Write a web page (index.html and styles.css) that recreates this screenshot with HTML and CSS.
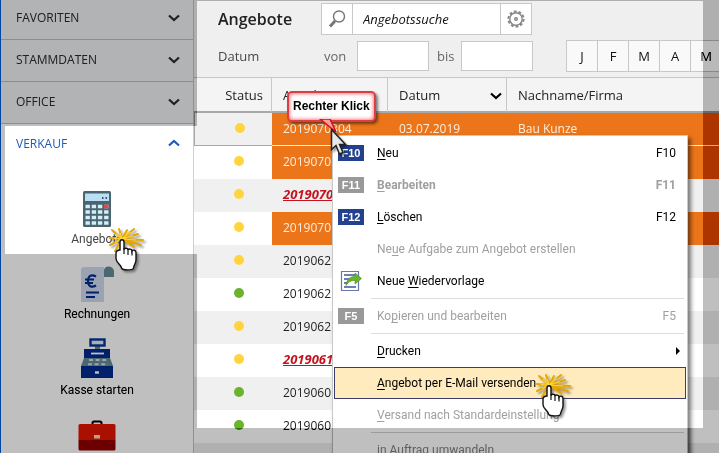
FILE: index.html
```html
<!DOCTYPE html>
<html lang="de">
<head>
    <meta charset="UTF-8">
    <meta name="viewport" content="width=device-width, initial-scale=1.0">
    <title>Angebote</title>
    <link rel="stylesheet" href="styles.css">
</head>

<body>

    <!-- Symbole, die mehrfach verwendet werden -->
    <svg class="defs" width="0" height="0" aria-hidden="true">
        <symbol id="chevron" viewBox="0 0 12 8">
            <path d="M1 1.5 6 6l5-4.5" fill="none" stroke="currentColor" stroke-width="2.2"/>
        </symbol>
        <symbol id="hand" viewBox="0 0 38 48">
            <path d="M14 12 4 3M14 12 11 2M14 12l5-9M14 12 26 2M14 12l16-5M14 12l21 1M14 12l19 6M14 12l12 8M14 12 2 11M14 12 2 18M14 12 7 24" fill="none" stroke="#e5a700" stroke-width="2" stroke-linecap="round"/>
            <path d="M14 12 8 6.500M14 12 12 6M14 12l8-7M14 12l11-3.500M14 12l14 1M14 12 6 11.500M14 12l-7 3.500" fill="none" stroke="#fbd440" stroke-width="1.200"/>
            <path d="M12 15c0-3 4-3 4 0v7.500c.5-1.800 4-1.600 4 .5.500-1.600 4-1.200 4 1 .8-1.400 4-1 4 1.400V33c0 3-2 4.500-2.500 8-.2 2.500-11.500 2.500-12 0-.6-4-5.500-5-5.500-9.500v-5c0-2 1.500-3.500 4-3.500z" fill="#fff" stroke="#111" stroke-width="1.400"/>
            <path d="M16 21v6M20 22.500V28M24 24v4.500" fill="none" stroke="#111" stroke-width="1.200"/>
        </symbol>
    </svg>

    <nav class="sidebar">
        <button class="group">FAVORITEN <svg class="chevron"><use href="#chevron"/></svg></button>
        <button class="group">STAMMDATEN <svg class="chevron"><use href="#chevron"/></svg></button>
        <button class="group">OFFICE <svg class="chevron"><use href="#chevron"/></svg></button>
        <button class="group open">VERKAUF <svg class="chevron up"><use href="#chevron"/></svg></button>

        <div class="tiles">
            <a class="tile active" href="#">
                <svg width="30" height="36" viewBox="0 0 30 36">
                    <rect x="1" y="0" width="28" height="36" rx="1.500" fill="#4b656f"/>
                    <rect x="3" y="2.500" width="24" height="7.500" fill="#b9def5"/>
                    <path d="M20 7h1.500M23.500 7H25" stroke="#223" stroke-width="1.500"/>
                    <path d="M3.500 15.500h23M3.500 21h23M3.500 26.500h23M3.500 32h23" stroke="#d3eefb" stroke-width="3.600" stroke-dasharray="4.400 1.800"/>
                    <rect x="22" y="13.700" width="4.500" height="3.600" fill="#f04040"/>
                </svg>
                Angebote
            </a>
            <a class="tile" href="#">
                <svg width="34" height="36" viewBox="0 0 34 36">
                    <path d="M4 1h20v35H1V4q0-3 3-3z" fill="#dbe3f2"/>
                    <path d="M24 11V5q0-4.500 4.500-4.500T34 5v6z" fill="#8ba7b0"/>
                    <path d="M16 10.500c-5-3-8 0-8 4.500s3 7.500 8 4.500M5 13.500h9M5 17h8" fill="none" stroke="#4060ac" stroke-width="2.200"/>
                    <path d="M6 26.500h13M6 31h9" stroke="#4060ac" stroke-width="2.200"/>
                </svg>
                Rechnungen
            </a>
            <a class="tile" href="#">
                <svg width="34" height="40" viewBox="0 0 34 40">
                    <path d="M15 8h5v4h-5z" fill="#8ba7b0"/>
                    <rect x="10.500" y="1.500" width="14" height="6" fill="#e8f0f4" stroke="#4068b0" stroke-width="2.400"/>
                    <path d="M4 11h26v9H4z" fill="#4060ac"/>
                    <path d="M11 15.500h13" stroke="#fff" stroke-width="1.800"/>
                    <path d="M4 20h26l3 8H1z" fill="#8ba7b0"/>
                    <path d="M9 22h18M8 26.200h20" stroke="#dfe6e8" stroke-width="2" stroke-dasharray="4 2.600"/>
                    <path d="M1 28h32v12H1z" fill="#4060ac"/>
                    <path d="M15 34.500h4" stroke="#fff" stroke-width="2.400"/>
                </svg>
                Kasse starten
            </a>
            <a class="tile case" href="#" aria-label="Werkzeug">
                <svg width="38" height="32" viewBox="0 0 38 32">
                    <path d="M14.500 5V3q0-1.500 1.500-1.500h6q1.500 0 1.500 1.500v2" fill="none" stroke="#404040" stroke-width="2"/>
                    <path d="M2 4h34q1.500 0 1.500 1.500V20H.5V5.500Q.5 4 2 4z" fill="#ea5040"/>
                    <path d="M.5 20h37v9q0 1.500-1.500 1.500H2Q.5 30.500.5 29z" fill="#ac4040"/>
                    <rect x="16" y="15" width="6" height="3.500" fill="#f5e4c8"/>
                </svg>
            </a>
        </div>
    </nav>

    <main class="content">
        <header class="toolbar">
            <div class="search-row">
                <h1>Angebote</h1>
                <div class="search">
                    <button aria-label="Suchen">
                        <svg width="20" height="20" viewBox="0 0 20 20" fill="none" stroke="#777" stroke-width="1.400">
                            <circle cx="12" cy="7.500" r="5.500"/>
                            <path d="m8 12-5 5.500" stroke-width="3"/>
                        </svg>
                    </button>
                    <input type="text" aria-label="Angebotssuche" placeholder="Angebotssuche">
                    <button aria-label="Einstellungen">
                        <svg width="20" height="20" viewBox="0 0 20 20" fill="none" stroke="#858585" stroke-width="1.400">
                            <circle cx="10" cy="10" r="6.200"/>
                            <circle cx="10" cy="10" r="7.600" stroke-width="2" stroke-dasharray="2.800 1.975"/>
                            <circle cx="10" cy="10" r="1.300"/>
                        </svg>
                    </button>
                </div>
            </div>
            <div class="filter-row">
                <span class="filter-title">Datum</span>
                <label for="von">von</label>
                <input type="text" id="von">
                <label for="bis" class="bis">bis</label>
                <input type="text" id="bis">
                <div class="months">
                    <button>J</button>
                    <button>F</button>
                    <button>M</button>
                    <button>A</button>
                    <button>M</button>
                </div>
            </div>
        </header>

        <table>
            <colgroup>
                <col class="col-status">
                <col class="col-nr">
                <col class="col-datum">
                <col>
            </colgroup>
            <thead>
                <tr>
                    <th>Status</th>
                    <th>Angebot</th>
                    <th>Datum <svg class="chevron"><use href="#chevron"/></svg></th>
                    <th>Nachname/Firma</th>
                </tr>
            </thead>
            <tbody>
                <tr class="orange selected"><td><i class="dot"></i></td><td>2019070304</td><td>03.07.2019</td><td>Bau Kunze</td></tr>
                <tr class="orange"><td><i class="dot"></i></td><td>2019070</td><td></td><td></td></tr>
                <tr><td><i class="dot"></i></td><td class="late">2019070</td><td></td><td></td></tr>
                <tr class="orange"><td><i class="dot"></i></td><td>2019070</td><td></td><td></td></tr>
                <tr><td><i class="dot"></i></td><td>2019062</td><td></td><td></td></tr>
                <tr><td><i class="dot green"></i></td><td>2019062</td><td></td><td></td></tr>
                <tr><td><i class="dot"></i></td><td>2019062</td><td></td><td></td></tr>
                <tr><td><i class="dot"></i></td><td class="late">2019061</td><td></td><td></td></tr>
                <tr><td><i class="dot green"></i></td><td>2019060</td><td></td><td></td></tr>
                <tr><td><i class="dot green"></i></td><td>2019060</td><td></td><td></td></tr>
                <tr><td></td><td></td><td></td><td></td></tr>
            </tbody>
        </table>

        <div class="menu">
            <button><kbd class="key">F10</kbd><span><u>N</u>eu</span><span class="shortcut">F10</span></button>
            <button class="bold" disabled><kbd class="key">F11</kbd><span><u>B</u>earbeiten</span><span class="shortcut">F11</span></button>
            <button><kbd class="key">F12</kbd><span><u>L</u>öschen</span><span class="shortcut">F12</span></button>
            <button disabled><span class="label">Ne<u>u</u>e Aufgabe zum Angebot erstellen</span></button>
            <button>
                <svg class="menu-icon" width="26" height="22" viewBox="0 0 26 22">
                    <path d="M3.500 1.500h17v19h-17z" fill="#fff" stroke="#6478b4" stroke-width="1.200"/>
                    <path d="M6 5h11M6 9h7M6 13h4M6 17h12" stroke="#3c549c" stroke-width="1.600"/>
                    <path d="M8 15.500C9 9 12 6.500 17 6.500V3l6.500 5.500L17 14v-3.500c-4 0-6.500 1-9 5z" fill="#69b32d" stroke="#3f8a1a" stroke-width=".6"/>
                </svg>
                <span>Neue <u>W</u>iedervorlage</span>
            </button>
            <hr>
            <button disabled><kbd class="key">F5</kbd><span>Ko<u>p</u>ieren und bearbeiten</span><span class="shortcut">F5</span></button>
            <hr>
            <button><span class="label"><u>D</u>rucken</span><span class="arrow"></span></button>
            <button class="hover"><span class="label"><u>A</u>ngebot per E-Mail versenden</span></button>
            <button disabled><span class="label"><u>V</u>ersand nach Standardeinstellung</span></button>
            <hr>
            <button disabled><span class="label"><u>i</u>n Auftrag umwandeln</span></button>
        </div>
    </main>

    <div class="shade"></div>

    <!-- Hinweise -->
    <div class="callout">Rechter Klick
        <svg class="callout-tip" width="20" height="15" viewBox="0 0 20 15">
            <path d="M1 0 17 13 11 0z" fill="#f6a0a0" stroke="#d80f1e" stroke-width="1.500"/>
        </svg>
    </div>
    <svg class="pointer" width="18" height="28" viewBox="0 0 18 28">
        <path d="M1.500 1.500v20l4.500-4 3.500 8.500 3.500-1.500-3.500-8h6z" fill="#e8e8e8" stroke="#222" stroke-width="1.500"/>
    </svg>
    <svg class="hand hand-nav"><use href="#hand"/></svg>
    <svg class="hand hand-menu"><use href="#hand"/></svg>

</body>
</html>
```
FILE: styles.css
```css
* {
    box-sizing: border-box;
}

body {
    margin: 0;
    height: 100vh;
    display: flex;
    position: relative;
    overflow: hidden;
    background-color: white;
    color: #222;
    font-family: "Open Sans", "Noto Sans", sans-serif;
    font-size: 13px;
}

button,
input {
    margin: 0;
    padding: 0;
    font: inherit;
    color: inherit;
}

.defs {
    position: absolute;
}

/* Navigation links */
.sidebar {
    flex: 0 0 194px;
    border-left: 1px solid #4088e0;
    border-right: 1px solid #cfcfcf;
    overflow: hidden;
}

.group {
    display: flex;
    justify-content: space-between;
    align-items: center;
    width: 100%;
    height: 42px;
    padding: 0 13px 2px 15px;
    border: none;
    border-bottom: 1px solid #cdcdcf;
    background-color: #f2f3f5;
    color: #606060;
    font-size: 12px;
}

.group:first-child {
    height: 40px;
    padding-bottom: 4px;
}

.group.open {
    height: 40px;
    border: none;
    background-color: white;
    color: #1e5ab8;
}

.chevron {
    width: 12px;
    height: 8px;
}

.up {
    transform: rotate(180deg);
}

.tiles {
    display: flex;
    flex-direction: column;
    align-items: center;
    gap: 16px;
    padding-top: 27px;
}

.tile {
    display: flex;
    flex-direction: column;
    align-items: center;
    gap: 4px;
    color: #303030;
    font-family: Roboto, "Open Sans", sans-serif;
    font-size: 12px;
    line-height: 16px;
    text-decoration: none;
}

.active {
    margin-bottom: 3px;
    color: #444;
}

.case {
    margin-top: 6px;
}

/* Hauptbereich */
.content {
    flex: 1;
    min-width: 0;
    position: relative;
    overflow: hidden;
}

.toolbar {
    display: flex;
    flex-direction: column;
    gap: 5px;
    padding: 3px 0 5px 24px;
    border-bottom: 1px solid #c8c8c8;
    background-color: #efefef;
}

.search-row,
.filter-row {
    display: flex;
    align-items: center;
    height: 32px;
}

h1 {
    width: 103px;
    margin: 0;
    font-size: 16px;
    font-weight: 600;
}

.search {
    display: flex;
    width: 211px;
    height: 32px;
    border: 1px solid #c8c8c8;
    background-color: white;
}

.search button {
    display: flex;
    justify-content: center;
    align-items: center;
    width: 30px;
    border: none;
    background-color: white;
}

.search input {
    flex: 1;
    min-width: 0;
    padding-left: 10px;
    border: solid #c8c8c8;
    border-width: 0 1px;
    font-style: italic;
}

.search input::placeholder {
    color: #111;
}

.filter-row {
    color: #666;
}

.filter-row > * {
    flex-shrink: 0;
}

.filter-title {
    width: 106px;
    color: #484848;
}

.filter-row label {
    width: 33px;
}

.filter-row .bis {
    width: 32px;
    padding-left: 8px;
}

.filter-row input {
    width: 72px;
    height: 30px;
    border: 1px solid #c8c8c8;
    background-color: white;
}

.months {
    display: flex;
    margin-left: 33px;
}

.months button {
    width: 32px;
    height: 32px;
    margin-right: -1px;
    border: 1px solid #c8c8c8;
    background-color: #f9f9f9;
    color: #111;
}

/* Tabelle */
table {
    width: 100%;
    table-layout: fixed;
    border-collapse: separate;
    border-spacing: 0;
}

.col-status {
    width: 78px;
}

.col-nr {
    width: 116px;
}

.col-datum {
    width: 119px;
}

th {
    height: 35px;
    padding: 0 11px;
    border-right: 1px solid #c8c8c8;
    border-bottom: 2px solid #a8a8a8;
    background-color: #f4f4f4;
    font-weight: 500;
    text-align: left;
}

th:first-child {
    padding: 0 8px 0 0;
    text-align: right;
}

th:last-child {
    border-right: none;
}

th .chevron {
    float: right;
    margin: 6px -7px 0 0;
    color: black;
}

td {
    height: 33px;
    padding: 0 11px 2px;
    border-bottom: 1px solid transparent;
    font-size: 12px;
}

td:first-child {
    padding: 0 0 2px 12px;
    text-align: center;
}

tbody tr:nth-child(odd) {
    background-color: #f0f0f0;
}

tbody tr.orange td:nth-child(n+2) {
    background-color: #ec751a;
    color: #fdeee0;
}

tbody tr.selected td:nth-child(n+2) {
    border-bottom-color: #f4f4f4;
}

.selected td:first-child {
    border: 1px solid #a8a8a8;
    border-width: 0 0 1px 1px;
}

.dot {
    display: block;
    width: 10px;
    height: 10px;
    margin: 0 auto;
    border-radius: 50%;
    background-color: #ffd43c;
}

.green {
    background-color: #69b32d;
}

.late {
    color: #c4121f;
    font-size: 13px;
    font-style: italic;
    font-weight: bold;
    text-decoration: underline;
}

/* Kontextmenü */
.menu {
    position: absolute;
    left: 138px;
    top: 135px;
    width: 356px;
    padding: 1px;
    border: 1px solid #c8c8c8;
    background-color: white;
    box-shadow: 3px 3px 4px rgba(0, 0, 0, 0.5);
    font-family: Roboto, "Open Sans", sans-serif;
    font-size: 12px;
}

.menu button {
    display: flex;
    align-items: center;
    gap: 13px;
    width: 100%;
    height: 32px;
    padding: 0 10px 0 4px;
    border: none;
    background-color: transparent;
    color: black;
}

.menu button:disabled {
    color: #a0a0a0;
}

.menu .bold {
    font-weight: bold;
}

.menu .hover {
    border: 1px solid #3c3c6c;
    padding-left: 3px;
    background-color: #ffebbe;
}

.menu hr {
    height: 1px;
    margin: 1px 2px 1px 37px;
    border: none;
    background-color: #dcdcdc;
}

.menu u {
    text-underline-offset: 2px;
}

.key {
    width: 26px;
    height: 16px;
    background-color: #23418f;
    color: white;
    font: bold 11px/16px "Liberation Sans", Arial, sans-serif;
}

button:disabled .key {
    background-color: #999;
}

.label {
    margin-left: 39px;
}

.shortcut,
.arrow {
    margin-left: auto;
}

.arrow {
    border: solid transparent;
    border-width: 4px 0 4px 4px;
    border-left-color: black;
    margin-right: -4px;
}

/* Abdunklung ausserhalb der hervorgehobenen Bereiche */
.shade {
    position: absolute;
    inset: 0;
    pointer-events: none;
    backdrop-filter: brightness(0.667) contrast(1.5);
    clip-path: polygon(evenodd, 0 0, 100% 0, 100% 100%, 0 100%, 0 0,
        197px 1px, calc(100% - 16px) 1px, calc(100% - 16px) calc(100% - 25px), 197px calc(100% - 25px),
        197px 254px, 5px 254px, 5px 126px, 197px 126px, 197px 1px, 0 0);
}

.callout {
    position: absolute;
    left: 287px;
    top: 91px;
    padding: 0 4px;
    border: 2px solid #e03c46;
    border-radius: 5px;
    background-color: white;
    box-shadow: inset 0 0 4px #f04040, 2px 2px 3px rgba(0, 0, 0, 0.5);
    color: black;
    font: bold 12px/27px "Liberation Sans", Arial, sans-serif;
    white-space: nowrap;
}

.callout-tip {
    position: absolute;
    left: 30px;
    top: 26px;
}

.pointer {
    position: absolute;
    left: 330px;
    top: 128px;
    filter: drop-shadow(2px 2px 1px rgba(0, 0, 0, 0.4));
}

.hand {
    position: absolute;
    width: 38px;
    height: 48px;
    filter: drop-shadow(2px 2px 1px rgba(0, 0, 0, 0.4));
}

.hand-nav {
    left: 108px;
    top: 227px;
}

.hand-menu {
    left: 535px;
    top: 373px;
}
```
